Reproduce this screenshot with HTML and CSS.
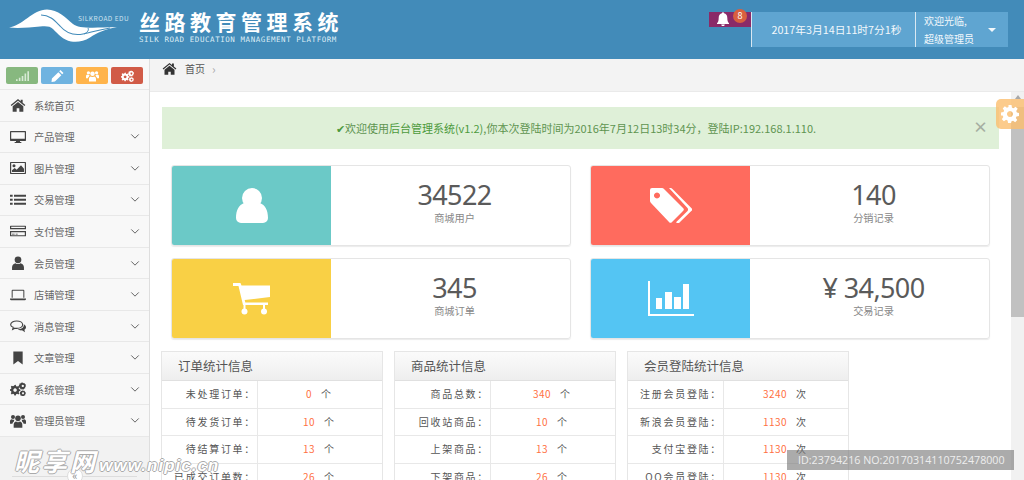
FILE: index.html
```html
<!DOCTYPE html>
<html lang="zh">
<head>
<meta charset="utf-8">
<title>丝路教育管理系统</title>
<link rel="stylesheet" href="styles.css">
</head>
<body>
<svg class="sprite" aria-hidden="true">
  <symbol id="i-home" viewBox="0 0 24 20"><path d="M12 1 1 10l1.300 1.500L12 3.600l9.700 7.900L23 10l-4-3.300V2h-3v2.200zM12 5.500 4 12v8h6v-5h4v5h6v-8z"/></symbol>
  <symbol id="i-desktop" viewBox="0 0 24 20"><path d="M1 1h22a1 1 0 0 1 1 1v13a1 1 0 0 1-1 1h-8v1.500h2V19H7v-1.500h2V16H1a1 1 0 0 1-1-1V2a1 1 0 0 1 1-1zm.8 1.800v10h20.400v-10z"/></symbol>
  <symbol id="i-picture" viewBox="0 0 24 20"><path d="M1 1h22a1 1 0 0 1 1 1v16a1 1 0 0 1-1 1H1a1 1 0 0 1-1-1V2a1 1 0 0 1 1-1zm.8 1.600v14.800h20.400V2.600z"/><circle cx="6" cy="6.500" r="2.300"/><path d="M3 16v-2.500l4-3.500 3 2.500 6.500-6.500 4.500 5V16z"/></symbol>
  <symbol id="i-list" viewBox="0 0 24 20"><path d="M0 2h4v3H0zm6 0h18v3H6zM0 8h4v3H0zm6 0h18v3H6zm-6 6h4v3H0zm6 0h18v3H6z"/></symbol>
  <symbol id="i-card" viewBox="0 0 24 20"><path d="M1 2h22a1 1 0 0 1 1 1v14a1 1 0 0 1-1 1H1a1 1 0 0 1-1-1V3a1 1 0 0 1 1-1zm.8 1.500V5.500h20.400V3.500zM0 7.500v2.500h24V7.500zm1.800 4.500v4.500h20.400V12zM3 14h4v1.300H3zm5.500 0h3v1.300h-3z"/></symbol>
  <symbol id="i-user" viewBox="0 0 20 20"><circle cx="10" cy="5.500" r="4.800"/><path d="M1.500 20v-4c0-3.500 2.500-5.500 5-5.800 1 .9 2.200 1.300 3.500 1.300s2.500-.4 3.500-1.300c2.500.3 5 2.300 5 5.800v4z"/></symbol>
  <symbol id="i-laptop" viewBox="0 0 24 20"><path d="M4 2h16a1.500 1.500 0 0 1 1.500 1.500V14H20V3.500H4V14H2.500V3.500A1.500 1.500 0 0 1 4 2zM0 15.200h24V16a2 2 0 0 1-2 2H2a2 2 0 0 1-2-2z"/></symbol>
  <symbol id="i-comments" viewBox="0 0 24 20"><path fill="none" stroke="currentColor" stroke-width="1.700" d="M10 2.500c5 0 9 2.400 9 5.500s-4 5.500-9 5.500c-1 0-1.800 0-2.600-.2L4 15l.8-3C2.500 11 1 9.700 1 8c0-3.100 4-5.500 9-5.500z"/><path d="M20.500 7.500c2 1 3.500 2.500 3.500 4.500 0 1.600-1 2.800-2.400 3.700l.9 3.800-4.500-3c-2.500.3-5-.3-6.500-1.500 5 0 9-2 9.300-6.500z"/></symbol>
  <symbol id="i-bookmark" viewBox="0 0 20 24"><path d="M2 1h16v22l-8-6-8 6z"/></symbol>
  <symbol id="i-cogs" viewBox="0 0 24 20"><path fill-rule="evenodd" d="M7 4l1.600-.3.600 2 1.500.7 1.900-1 1.400 1.400-1 1.900.7 1.500 2 .6v2l-2 .6-.7 1.500 1 1.900-1.400 1.400-1.900-1-1.500.7-.6 2h-2l-.6-2-1.500-.7-1.900 1L1.200 16.500l1-1.900-.7-1.500-2-.6v-2l2-.6.7-1.500-1-1.900L2.600 5l1.900 1 1.500-.7zM7.600 9a2.600 2.600 0 1 0 .01 0z"/><path fill-rule="evenodd" d="M19 0l1.200 1.300 1.500-.4.600 1.600 1.500.6-.3 1.600L24 6l-1.300 1.100.2 1.600-1.500.5-.7 1.500-1.600-.4L17.700 11l-1-1.300-1.600.1-.4-1.600-1.400-.8.5-1.500-.8-1.400 1.200-1 0-1.600 1.600-.2.900-1.400 1.500.6zm.2 3.700a1.700 1.700 0 1 0 .01 0zM19.500 12l1 1 1.400-.2.400 1.300 1.300.7-.4 1.300.6 1.200-1.100.9v1.400l-1.400.2-.9 1.100-1.300-.5-1.300.5-.8-1.100-1.400-.2v-1.400l-1.100-.9.6-1.200-.4-1.300 1.300-.7.4-1.300 1.400.2zm0 3a1.500 1.500 0 1 0 .01 0z"/></symbol>
  <symbol id="i-users" viewBox="0 0 24 20"><circle cx="12" cy="6" r="4.200"/><path d="M5.500 20v-4.500c0-2.500 1.700-4.300 3.700-4.700.8.600 1.800 1 2.800 1s2-.4 2.800-1c2 .4 3.700 2.200 3.700 4.700V20z"/><circle cx="4.500" cy="4" r="3"/><circle cx="19.500" cy="4" r="3"/><path d="M0 14v-3.500C0 8.800 1.200 7.600 2.500 7.300c.6.500 1.300.7 2 .7h2.200c-.6.800-1 1.800-1 3-1.500 1-2 2-2 3zM24 14v-3.500c0-1.700-1.200-2.900-2.500-3.200-.6.500-1.300.7-2 .7h-2.200c.6.800 1 1.800 1 3 1.500 1 2 2 2 3z"/></symbol>
  <symbol id="i-chevron" viewBox="0 0 12 8"><path fill="none" stroke="currentColor" stroke-width="1.200" d="M1.500 1.500 6 6l4.500-4.500"/></symbol>
  <symbol id="i-signal" viewBox="0 0 16 12"><path d="M0 10h2v2H0zm3.500-2h2v4h-2zM7 6h2v6H7zm3.500-3h2v9h-2zM14 0h2v12h-2z"/></symbol>
  <symbol id="i-pencil" viewBox="0 0 14 14"><path d="M10.500 0 14 3.500l-1.500 1.500L9 1.500zM8 2.500 11.500 6 4 13.500 0 14l.5-4z"/></symbol>
  <symbol id="i-bell" viewBox="0 0 14 16"><path d="M7 0a1.200 1.200 0 0 1 1.200 1.300C10.500 1.800 12 3.800 12 6.500c0 4 1 5.500 2 6.500v.8H0V13c1-1 2-2.500 2-6.500 0-2.700 1.500-4.700 3.800-5.200A1.200 1.200 0 0 1 7 0zM5 14.500h4a2 2 0 0 1-4 0z"/></symbol>
  <symbol id="i-gear" viewBox="0 0 24 24"><path fill-rule="evenodd" d="M10 0h4l.6 3.400 2 .8L19.500 2.300l2.800 2.800-2 2.800.9 2.100L24 10.600v4l-3.400.6-.8 2 1.900 2.900-2.800 2.800-2.800-2-2.100.9-.6 2.200h-4l-.6-3.400-2-.8-2.900 1.900-2.800-2.800 2-2.800-.9-2.100L0 14v-4l3.400-.6.800-2-1.900-2.900 2.800-2.800 2.800 2 2.100-.9zM12 8a4 4 0 1 0 .01 0z"/></symbol>
</svg>

<header class="topbar">
  <div class="brand">
    <svg class="logo" viewBox="9 9 110 34" aria-hidden="true">
      <path fill="#fff" d="M9 27.500C22 26 33 9.500 47 9.500c11 0 19 8.500 26 14.500 6 4.500 17 4 44 3-13 2.500-20 6-27 10.500-6 4-13 5-19 4-8-1.500-13-7.500-18-12.500-3-3-7-3-13-2.500-10 1-22 2-31 1z"/>
      <path fill="none" stroke="#428bb9" stroke-width="1.100" d="M41 15c9 0 14 6 19 11 6 7 13 10 23 8 9-2 15-4 27-6"/>
      <path fill="none" stroke="#428bb9" stroke-width="1" d="M84 34c4-2 5-4 4-6"/>
    </svg>
    <span class="logo-edu">SILKROAD EDU</span>
    <div class="brand-text">
      <div class="brand-title">丝路教育管理系统</div>
      <div class="brand-sub">SILK ROAD EDUCATION MANAGEMENT PLATFORM</div>
    </div>
  </div>
  <div class="status">
    <div class="bell">
      <svg class="bell-icon"><use href="#i-bell"/></svg>
      <span class="bell-count">8</span>
    </div>
    <div class="clock">2017年3月14日11时7分1秒</div>
    <div class="account">
      <div class="account-text">欢迎光临,<br>超级管理员</div>
      <span class="caret"></span>
    </div>
  </div>
</header>

<div class="layout">
  <aside class="sidebar">
    <div class="shortcuts">
      <button class="shortcut sc-green"><svg><use href="#i-signal"/></svg></button>
      <button class="shortcut sc-blue"><svg><use href="#i-pencil"/></svg></button>
      <button class="shortcut sc-orange"><svg><use href="#i-users"/></svg></button>
      <button class="shortcut sc-red"><svg><use href="#i-cogs"/></svg></button>
    </div>
    <nav class="menu">
      <a class="menu-item"><svg class="menu-icon"><use href="#i-home"/></svg>系统首页</a>
      <a class="menu-item"><svg class="menu-icon"><use href="#i-desktop"/></svg>产品管理<svg class="chev"><use href="#i-chevron"/></svg></a>
      <a class="menu-item"><svg class="menu-icon"><use href="#i-picture"/></svg>图片管理<svg class="chev"><use href="#i-chevron"/></svg></a>
      <a class="menu-item"><svg class="menu-icon"><use href="#i-list"/></svg>交易管理<svg class="chev"><use href="#i-chevron"/></svg></a>
      <a class="menu-item"><svg class="menu-icon"><use href="#i-card"/></svg>支付管理<svg class="chev"><use href="#i-chevron"/></svg></a>
      <a class="menu-item"><svg class="menu-icon"><use href="#i-user"/></svg>会员管理<svg class="chev"><use href="#i-chevron"/></svg></a>
      <a class="menu-item"><svg class="menu-icon"><use href="#i-laptop"/></svg>店铺管理<svg class="chev"><use href="#i-chevron"/></svg></a>
      <a class="menu-item"><svg class="menu-icon"><use href="#i-comments"/></svg>消息管理<svg class="chev"><use href="#i-chevron"/></svg></a>
      <a class="menu-item"><svg class="menu-icon"><use href="#i-bookmark"/></svg>文章管理<svg class="chev"><use href="#i-chevron"/></svg></a>
      <a class="menu-item"><svg class="menu-icon"><use href="#i-cogs"/></svg>系统管理<svg class="chev"><use href="#i-chevron"/></svg></a>
      <a class="menu-item"><svg class="menu-icon"><use href="#i-users"/></svg>管理员管理<svg class="chev"><use href="#i-chevron"/></svg></a>
    </nav>
    <div class="collapse"><span class="collapse-btn">«</span></div>
  </aside>

  <main class="content">
    <div class="crumbs">
      <svg class="crumb-home"><use href="#i-home"/></svg>
      <span>首页</span>
      <span class="crumb-sep">›</span>
    </div>
    <div class="pane">
      <div class="scroll">
        <div class="alert">
          <span><span class="tick">✔</span>欢迎使用<span class="alert-strong">后台管理系统(v1.2)</span>,你本次登陆时间为2016年7月12日13时34分，登陆IP:192.168.1.110.</span>
          <span class="alert-close">×</span>
        </div>

        <div class="cards">
          <div class="card">
            <div class="card-icon bg-teal"><svg class="big-user" viewBox="0 0 32 35"><circle cx="16" cy="10" r="10"/><path d="M5 35a5 5 0 0 1-5-5c0-8 3-13 8-15 2 2.500 5 4 8 4s6-1.500 8-4c5 2 8 7 8 15a5 5 0 0 1-5 5z"/></svg></div>
            <div class="card-body"><div class="card-num">34522</div><div class="card-label">商城用户</div></div>
          </div>
          <div class="card">
            <div class="card-icon bg-coral"><svg class="big-tags" viewBox="0 0 42 35"><path d="M2 0h10a3 3 0 0 1 2 1l19 19a2 2 0 0 1 0 3L22 34a2 2 0 0 1-3 0L1 15a3 3 0 0 1-1-2V2a2 2 0 0 1 2-2zm5 4.500a3 3 0 1 0 .01 0z" fill-rule="evenodd"/><path d="M19 0h1.500a3 3 0 0 1 2 1l18.800 19a2 2 0 0 1 0 3L30 34a2.500 2.500 0 0 1-4 .2L37.500 23a2.500 2.500 0 0 0 0-3z"/></svg></div>
            <div class="card-body"><div class="card-num">140</div><div class="card-label">分销记录</div></div>
          </div>
          <div class="card">
            <div class="card-icon bg-yellow"><svg class="big-cart" viewBox="0 0 37 32"><path d="M0 0h7.500l1 2.500H37v11.500L11.700 17l.6 2.500H35V22H10L5.500 3H0z"/><circle cx="11.500" cy="28.500" r="3"/><circle cx="31" cy="28.500" r="3"/><path d="M10.500 22h2v4h-2zm19.500 0h2v4h-2z"/></svg></div>
            <div class="card-body"><div class="card-num">345</div><div class="card-label">商城订单</div></div>
          </div>
          <div class="card">
            <div class="card-icon bg-sky"><svg class="big-chart" viewBox="0 0 46 35"><path d="M0 0h2v33h44v2H0z"/><path d="M8 17h6v11H8zm9-6h7v17h-7zm9 5h7v12h-7zm9-13h6v25h-6z"/></svg></div>
            <div class="card-body"><div class="card-num">¥ 34,500</div><div class="card-label">交易记录</div></div>
          </div>
        </div>

        <div class="stats">
          <section class="stat">
            <h3 class="stat-head">订单统计信息</h3>
            <div class="stat-row"><div class="stat-key">未处理订单：</div><div class="stat-val"><span class="num">0</span><span class="unit">个</span></div></div>
            <div class="stat-row"><div class="stat-key">待发货订单：</div><div class="stat-val"><span class="num">10</span><span class="unit">个</span></div></div>
            <div class="stat-row"><div class="stat-key">待结算订单：</div><div class="stat-val"><span class="num">13</span><span class="unit">个</span></div></div>
            <div class="stat-row"><div class="stat-key">已成交订单数：</div><div class="stat-val"><span class="num">26</span><span class="unit">个</span></div></div>
          </section>
          <section class="stat">
            <h3 class="stat-head">商品统计信息</h3>
            <div class="stat-row"><div class="stat-key">商品总数：</div><div class="stat-val"><span class="num">340</span><span class="unit">个</span></div></div>
            <div class="stat-row"><div class="stat-key">回收站商品：</div><div class="stat-val"><span class="num">10</span><span class="unit">个</span></div></div>
            <div class="stat-row"><div class="stat-key">上架商品：</div><div class="stat-val"><span class="num">13</span><span class="unit">个</span></div></div>
            <div class="stat-row"><div class="stat-key">下架商品：</div><div class="stat-val"><span class="num">26</span><span class="unit">个</span></div></div>
          </section>
          <section class="stat">
            <h3 class="stat-head">会员登陆统计信息</h3>
            <div class="stat-row"><div class="stat-key">注册会员登陆：</div><div class="stat-val"><span class="num">3240</span><span class="unit">次</span></div></div>
            <div class="stat-row"><div class="stat-key">新浪会员登陆：</div><div class="stat-val"><span class="num">1130</span><span class="unit">次</span></div></div>
            <div class="stat-row"><div class="stat-key">支付宝登陆：</div><div class="stat-val"><span class="num">1130</span><span class="unit">次</span></div></div>
            <div class="stat-row"><div class="stat-key">QQ会员登陆：</div><div class="stat-val"><span class="num">1130</span><span class="unit">次</span></div></div>
          </section>
        </div>
      </div>
      <div class="scrollbar">
        <span class="scroll-up"></span>
        <span class="scroll-thumb"></span>
      </div>
    </div>
  </main>
</div>

<div class="gear-tab"><svg><use href="#i-gear"/></svg></div>
<div class="wm-site"><span class="wm-cn">昵享网</span> <span class="wm-url">www.nipic.cn</span></div>
<div class="wm-id">ID:23794216 NO:20170314110752478000</div>
</body>
</html>
```
FILE: styles.css
```css
* { box-sizing: border-box; }
html, body { height: 480px; margin: 0; overflow: hidden; }
body { font-family: "Noto Sans CJK SC", "Noto Sans", sans-serif; font-size: 10px; color: #666; background: #fff; }
.sprite { display: none; }
svg { fill: currentColor; display: block; }

.topbar { height: 59px; background: #428bb9; color: #fff; display: flex; justify-content: space-between; padding: 12px 16px 0 9px; }
.brand { display: flex; align-items: flex-start; }
.logo { width: 110px; height: 34px; margin-top: -3px; flex: none; }
.logo-edu { font-size: 6.500px; letter-spacing: .5px; color: #cfe3f0; margin: 1px 0 0 -41px; width: 62px; flex: none; line-height: 10px; white-space: nowrap; }
.brand-text { margin: -4px 0 0 -1px; }
.brand-title { font-weight: 700; font-size: 21px; line-height: 26px; letter-spacing: 4.500px; white-space: nowrap; }
.brand-sub { font-family: "DejaVu Sans Mono", monospace; font-size: 7.500px; line-height: 10px; letter-spacing: .56px; margin-top: 1px; color: #dcebf5; white-space: nowrap; }

.status { display: flex; align-items: flex-start; }
.bell { width: 42px; height: 15px; background: #8a2a68; display: flex; position: relative; padding-left: 8px; }
.bell-icon { width: 12px; height: 14px; }
.bell-count { position: absolute; left: 24px; top: -3px; width: 14px; height: 14px; border-radius: 50%; background: #d9603f; font-size: 9px; line-height: 13px; text-align: center; }
.clock { width: 164px; height: 35px; background: #5fa5d1; border-left: 1px solid #d9e8f2; font-size: 10.750px; line-height: 35px; text-align: center; color: #f2f8fc; padding-left: 6px; }
.account { width: 93px; height: 35px; background: #5fa5d1; border-left: 1px solid #d9e8f2; display: flex; align-items: center; justify-content: space-between; padding: 0 12px 0 8px; }
.account-text { font-size: 10px; line-height: 17.500px; color: #f2f8fc; }
.caret { width: 0; height: 0; border: 4.500px solid transparent; border-top: 4.500px solid #f2f8fc; border-bottom: 0; }

.layout { display: flex; height: 421px; }
.sidebar { width: 150px; flex: none; background: #f2f2f2; border-right: 1px solid #dedede; display: flex; flex-direction: column; }
.shortcuts { height: 31px; background: #f8f8f8; border-bottom: 1px solid #e8e8e8; display: flex; gap: 3px; padding: 8px 0 0 6px; }
.shortcut { width: 32px; height: 17px; border: 0; border-radius: 2px; color: #fff; padding: 0; display: flex; align-items: center; justify-content: center; }
.shortcut svg { width: 13px; height: 12px; }
.sc-green { background: #87b87f; color: #d7ead4; }
.sc-blue { background: #6fb3e0; }
.sc-orange { background: #ffb44b; }
.sc-red { background: #d15b47; }

.menu-item { height: 31.550px; background: #f8f8f8; border-bottom: 1px solid #e8e8e8; display: flex; align-items: center; color: #666; font-size: 10.200px; padding-left: 10px; }
.menu-icon { width: 16px; height: 14px; margin-right: 8px; color: #444; flex: none; }
.chev { width: 10px; height: 7px; margin-left: auto; margin-right: 9px; color: #666; }
.collapse { flex: 1; position: relative; }
.collapse-btn { position: absolute; left: 67px; top: 31px; width: 16px; height: 16px; border-radius: 50%; border: 1px solid #ddd; background: #fff; font-size: 11px; line-height: 12px; text-align: center; color: #888; }
.collapse::before { content: ""; position: absolute; left: 12px; right: 12px; top: 39px; border-top: 1px solid #ddd; }

.content { flex: 1; min-width: 0; display: flex; flex-direction: column; }
.crumbs { height: 33px; background: #f3f3f3; border-bottom: 1px solid #eaeaea; display: flex; align-items: flex-start; gap: 7px; padding: 2px 0 0 12px; color: #555; font-size: 10px; line-height: 16px; }
.crumb-home { width: 15px; height: 13px; color: #333; margin: 1px 1px 0 0; }
.crumb-sep { color: #aaa; font-size: 12px; }
.pane { flex: 1; display: flex; min-height: 0; overflow: hidden; }
.scroll { flex: 1; min-width: 0; padding: 15px 12px 0; }
.scrollbar { width: 13px; flex: none; background: #f1f1f1; display: flex; flex-direction: column; align-items: center; padding-top: 3px; }
.scroll-up { width: 0; height: 0; border: 3px solid transparent; border-bottom: 4px solid #a8a8a8; border-top: 0; }
.scroll-thumb { width: 13px; height: 210px; background: #c1c1c1; margin-top: 8px; }

.alert { height: 42px; background: #dff0d8; color: #5e9450; display: flex; align-items: center; justify-content: center; font-size: 11px; position: relative; padding-right: 9px; }
.alert-strong { color: #4c9a3c; }
.tick { color: #4c9a3c; }
.alert-close { position: absolute; right: 11px; top: 12px; font-size: 15px; line-height: 16px; font-weight: 700; color: #a5aea1; }

.cards { display: grid; grid-template-columns: 400px 400px; column-gap: 19px; row-gap: 12px; padding: 16px 0 0 9px; }
.card { height: 81px; border: 1px solid #e5e5e5; border-radius: 3px; box-shadow: 0 1px 1px #ececec; display: flex; overflow: hidden; }
.card-icon { width: 159px; flex: none; display: flex; align-items: center; justify-content: center; color: #fff; }
.bg-teal { background: #6bc9c7; }
.bg-coral { background: #ff6b5e; }
.bg-yellow { background: #f9d045; }
.bg-sky { background: #54c5f3; }
.big-user { width: 32px; height: 35px; }
.big-tags { width: 42px; height: 35px; }
.big-cart { width: 37px; height: 32px; }
.big-chart { width: 46px; height: 35px; }
.card-body { flex: 1; text-align: center; padding: 12px 0 0 8px; }
.card-num { font-family: "Noto Sans", sans-serif; font-size: 27px; line-height: 34px; color: #5a5a5a; letter-spacing: -.6px; }
.card-label { font-size: 10.200px; line-height: 12px; color: #888; }

.stats { display: flex; gap: 11px; margin-top: 12px; margin-left: -1px; }
.stat { width: 222px; border: 1px solid #e6e6e6; }
.stat-head { margin: 0; height: 29px; padding-left: 16px; font-weight: 400; font-size: 12.500px; line-height: 28px; color: #555; background: linear-gradient(#fbfbfb, #eeeeee); border-bottom: 1px solid #e0e0e0; }
.stat-row { height: 27.600px; display: flex; border-bottom: 1px solid #e8e8e8; font-size: 10px; color: #555; letter-spacing: 1.700px; }
.stat-key { width: 96px; border-right: 1px solid #e8e8e8; line-height: 26px; padding-right: 1px; white-space: nowrap; display: flex; justify-content: flex-end; }
.stat-val { flex: 1; display: grid; grid-template-columns: minmax(0, 1fr) auto minmax(0, 1fr); padding-right: 22px; line-height: 26px; }
.num { grid-column: 2; color: #ff7043; letter-spacing: .4px; }
.unit { grid-column: 3; margin-left: 9px; white-space: nowrap; }

.gear-tab { position: absolute; left: 996px; top: 99px; width: 28px; height: 30px; border-radius: 5px 0 0 5px; background: rgba(251, 190, 110, .8); display: flex; align-items: center; padding-left: 5px; }
.gear-tab svg { width: 18px; height: 18px; color: #fff; }
.wm-site { position: absolute; left: 14px; top: 444px; color: #fff; font-style: italic; white-space: nowrap; text-shadow: 1px 0 0 #aaa, -1px 0 0 #aaa, 0 1px 0 #aaa, 0 -1px 0 #aaa; }
.wm-cn { font-size: 25px; font-weight: 700; line-height: 32px; letter-spacing: 3px; }
.wm-url { font-family: "Liberation Sans", sans-serif; font-size: 17px; font-weight: 700; letter-spacing: 1px; margin-left: -1px; }
.wm-id { position: absolute; left: 787px; top: 450px; width: 227px; height: 20px; background: rgba(120, 120, 120, .62); color: #eee; font-family: "Open Sans", sans-serif; font-size: 10.700px; line-height: 20px; padding-left: 11px; white-space: nowrap; }
```
